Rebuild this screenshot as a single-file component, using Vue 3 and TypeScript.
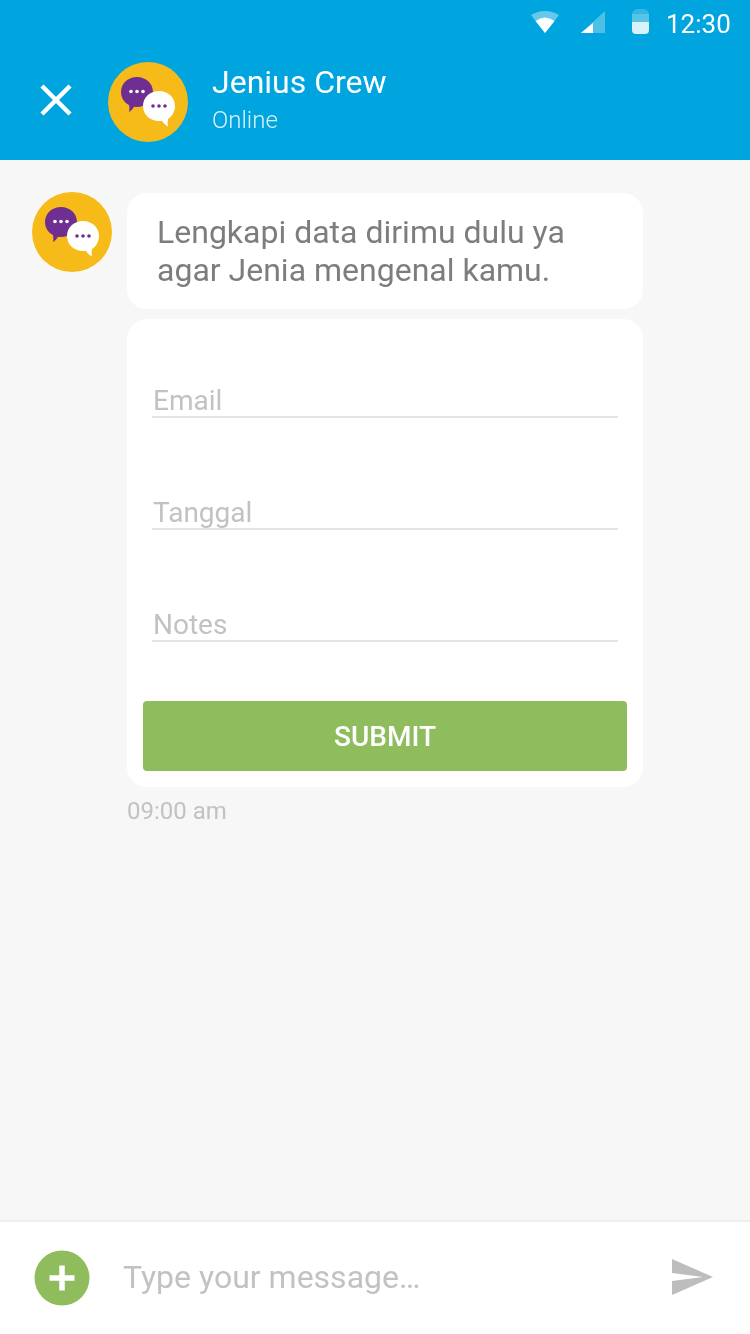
<template>
  <div class="screen">
    <header class="top">
      <div class="status">
        <svg class="wifi" width="28" height="22" viewBox="0 0 28 22">
          <path d="M0 4 Q14 -4 28 4 L14 22 Z" fill="#fff" opacity="0.4" />
          <path d="M4.500 10 Q14 3 23.500 10 L14 22 Z" fill="#fff" />
        </svg>
        <svg class="signal" width="24" height="22" viewBox="0 0 24 22">
          <path d="M24 0 V22 H0 Z" fill="#fff" opacity="0.3" />
          <path d="M12 12 V22 H0 Z" fill="#fff" />
        </svg>
        <svg class="battery" width="17" height="25" viewBox="0 0 17 25">
          <path d="M0 5 Q1 0 6 0 H11 Q16 0 17 5 Z" fill="#fff" opacity="0.2" />
          <path d="M0 5 H17 V13 H0 Z" fill="#fff" opacity="0.35" />
          <path d="M0 13 H17 V21 Q17 25 13 25 H4 Q0 25 0 21 Z" fill="#fff" opacity="0.85" />
        </svg>
        <span class="clock">12:30</span>
      </div>
      <div class="bar">
        <svg class="close" width="34" height="34" viewBox="0 0 34 34">
          <path d="M3 3 L31 31 M31 3 L3 31" stroke="#fff" stroke-width="4.5" fill="none" />
        </svg>
        <svg class="avatar" width="80" height="80" viewBox="0 0 80 80">
          <circle cx="40" cy="40" r="40" fill="#f6ba19" />
          <path d="M29 15 C38 15 45 21.500 45 30 C45 38.500 38 45 29 45 C28 45 27 45 26 44.800 C25 47 23 49 21 50 C21.500 48 21.500 45.500 21 43 C16 40.500 13 35.500 13 30 C13 21.500 20 15 29 15 Z" fill="#6f2f92" />
          <circle cx="23" cy="29.500" r="1.800" fill="#fff" />
          <circle cx="29" cy="29.500" r="1.800" fill="#fff" />
          <circle cx="35" cy="29.500" r="1.800" fill="#fff" />
          <path d="M51 29 C42 29 35 35.500 35 44 C35 52.500 42 59 51 59 C52 59 53 59 54 58.800 C55 61 57 63 60 64.500 C59.500 62 59.500 59.500 60 57 C64 54.500 67 49.500 67 44 C67 35.500 60 29 51 29 Z" fill="#fff" />
          <circle cx="45" cy="44" r="1.800" fill="#6f2f92" />
          <circle cx="51" cy="44" r="1.800" fill="#6f2f92" />
          <circle cx="57" cy="44" r="1.800" fill="#6f2f92" />
        </svg>
        <div class="who">
          <div class="name">Jenius Crew</div>
          <div class="state">Online</div>
        </div>
      </div>
    </header>

    <main class="chat">
      <svg class="avatar" width="80" height="80" viewBox="0 0 80 80">
        <circle cx="40" cy="40" r="40" fill="#f6ba19" />
        <path d="M29 15 C38 15 45 21.500 45 30 C45 38.500 38 45 29 45 C28 45 27 45 26 44.800 C25 47 23 49 21 50 C21.500 48 21.500 45.500 21 43 C16 40.500 13 35.500 13 30 C13 21.500 20 15 29 15 Z" fill="#6f2f92" />
        <circle cx="23" cy="29.500" r="1.800" fill="#fff" />
        <circle cx="29" cy="29.500" r="1.800" fill="#fff" />
        <circle cx="35" cy="29.500" r="1.800" fill="#fff" />
        <path d="M51 29 C42 29 35 35.500 35 44 C35 52.500 42 59 51 59 C52 59 53 59 54 58.800 C55 61 57 63 60 64.500 C59.500 62 59.500 59.500 60 57 C64 54.500 67 49.500 67 44 C67 35.500 60 29 51 29 Z" fill="#fff" />
        <circle cx="45" cy="44" r="1.800" fill="#6f2f92" />
        <circle cx="51" cy="44" r="1.800" fill="#6f2f92" />
        <circle cx="57" cy="44" r="1.800" fill="#6f2f92" />
      </svg>
      <div class="messages">
        <div class="bubble">Lengkapi data dirimu dulu ya<br />agar Jenia mengenal kamu.</div>
        <form class="card" @submit.prevent>
          <div v-for="f in fields" :key="f" class="field">{{ f }}</div>
          <button class="submit" type="submit">SUBMIT</button>
        </form>
        <div class="time">09:00 am</div>
      </div>
    </main>

    <footer class="composer">
      <svg class="plus" width="56" height="56" viewBox="0 0 56 56">
        <circle cx="28" cy="28" r="27.500" fill="#8fbc5c" />
        <path d="M15.500 28 H40.500 M28 15.500 V40.500" stroke="#fff" stroke-width="5.500" fill="none" />
      </svg>
      <div class="hint">Type your message…</div>
      <svg class="send" width="42" height="36" viewBox="0 0 42 36">
        <path d="M0 0 L41 18 L0 36 V22 L31 18 L0 14 Z" fill="#bdbdbd" />
      </svg>
    </footer>
  </div>
</template>

<script setup lang="ts">
const fields: string[] = ['Email', 'Tanggal', 'Notes']
</script>

<style scoped>
.screen {
  width: 750px;
  height: 1334px;
  display: flex;
  flex-direction: column;
  background: #f7f7f7;
  font-family: Roboto, "Liberation Sans", sans-serif;
}

.top {
  height: 160px;
  background: #00a5df;
  color: #fff;
}

.status {
  height: 50px;
  display: flex;
  align-items: flex-start;
  justify-content: flex-end;
  padding-right: 19px;
}

.wifi {
  margin: 11px 22px 0 0;
}

.signal {
  margin: 11px 27px 0 0;
}

.battery {
  margin: 9px 17px 0 0;
}

.clock {
  font-size: 26px;
  line-height: 48px;
  will-change: transform;
}

.bar {
  display: flex;
  align-items: center;
  height: 80px;
  margin-top: 12px;
  padding-left: 39px;
}

.close {
  margin: 0 35px 4px 0;
}

.avatar {
  flex: none;
}

.who {
  align-self: flex-start;
  margin: 1px 0 0 24px;
  will-change: transform;
}

.name {
  font-size: 32px;
  line-height: 38px;
}

.state {
  margin-top: 1px;
  font-size: 24px;
  line-height: 36px;
  font-weight: 300;
  opacity: 0.85;
}

.chat {
  flex: 1;
  display: flex;
  align-items: flex-start;
  padding: 32px 0 0 32px;
}

.messages {
  margin-left: 15px;
  margin-top: 1px;
  width: 516px;
  will-change: transform;
}

.bubble {
  background: #fff;
  border-radius: 20px;
  height: 116px;
  box-sizing: border-box;
  padding: 20px 30px 0;
  font-size: 32px;
  line-height: 38px;
  color: #7d7d7d;
}

.card {
  margin-top: 10px;
  height: 468px;
  background: #fff;
  border-radius: 20px;
  box-sizing: border-box;
  padding: 65px 16px 16px;
}

.field {
  height: 34px;
  margin: 0 9px 78px;
  padding: 1px 0 0 1px;
  font-size: 28px;
  line-height: 32px;
  color: #c2c2c2;
  border-bottom: 2px solid #e4e4e4;
  box-sizing: border-box;
}

.field:last-of-type {
  margin-bottom: 59px;
}

.submit {
  display: block;
  width: 484px;
  height: 70px;
  border: 0;
  border-radius: 4px;
  padding: 1px 0 0;
  background: #8fbc5c;
  color: #fff;
  font: 500 28px Roboto, "Liberation Sans", sans-serif;
}

.time {
  margin-top: 10px;
  font-size: 24px;
  line-height: 28px;
  color: #c2c2c2;
}

.composer {
  height: 114px;
  box-sizing: border-box;
  border-top: 2px solid #eeeeee;
  background: #fff;
  display: flex;
  align-items: center;
  padding: 0 36px 0 34px;
}

.hint {
  flex: 1;
  margin-left: 33px;
  margin-bottom: 2px;
  font-size: 32px;
  color: #c2c2c2;
  will-change: transform;
}

.send {
  margin-bottom: 2px;
}
</style>

<style>
body {
  background: #f7f7f7;
}
</style>
